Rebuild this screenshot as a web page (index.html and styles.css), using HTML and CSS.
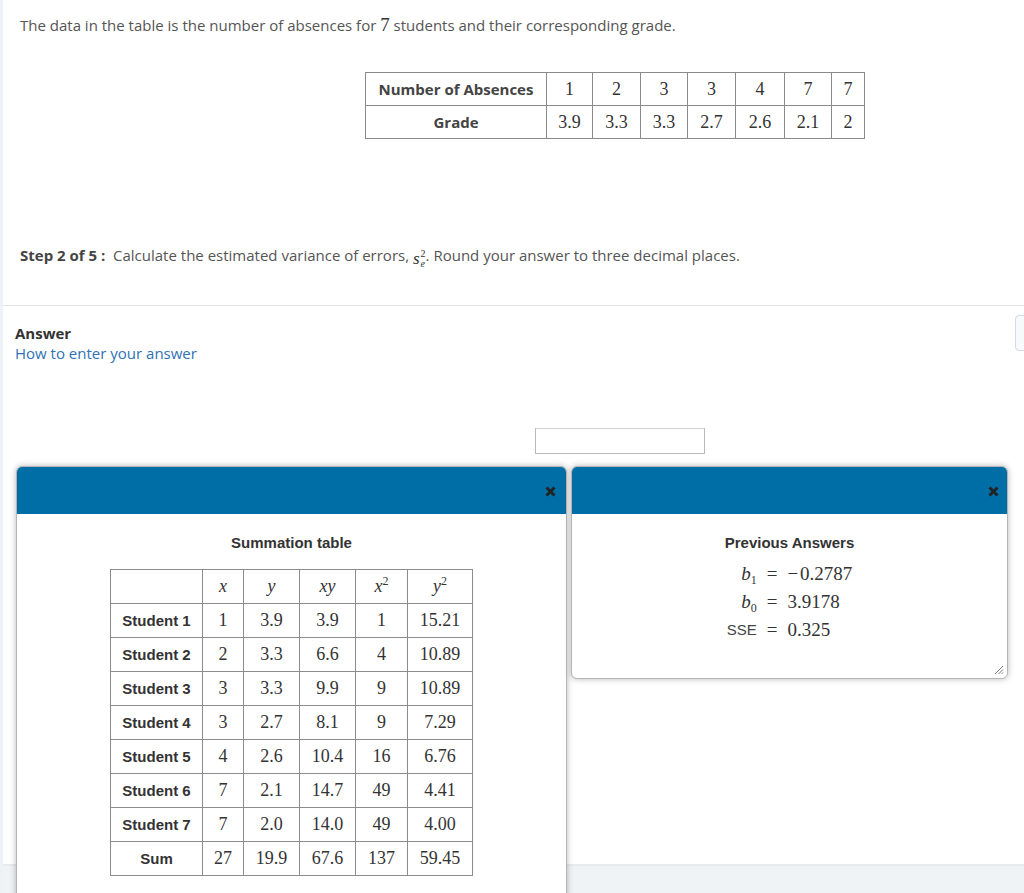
FILE: index.html
```html
<!DOCTYPE html>
<html lang="en">
<head>
<meta charset="utf-8">
<title>Step 2 of 5</title>
<link rel="stylesheet" href="styles.css">
</head>
<body>
<div class="page">
  <section class="question">
    <p class="intro">The data in the table is the number of absences for <span class="num">7</span> students and their corresponding grade.</p>
    <table class="data">
      <tr><th>Number of Absences</th><td>1</td><td>2</td><td>3</td><td>3</td><td>4</td><td>7</td><td>7</td></tr>
      <tr><th>Grade</th><td>3.9</td><td>3.3</td><td>3.3</td><td>2.7</td><td>2.6</td><td>2.1</td><td>2</td></tr>
    </table>
    <p class="step"><b>Step 2 of 5 :</b>&nbsp; Calculate the estimated variance of errors, <span class="se"><i>s</i><span class="ss"><span class="sup">2</span><span class="sub">e</span></span></span>. Round your answer to three decimal places.</p>
  </section>

  <section class="answer">
    <div class="answer-label">Answer</div>
    <a class="howto" href="#">How to enter your answer</a>
    <div class="input-row"><div class="input-box"></div></div>
  </section>

  <footer class="bottom-bar"></footer>

  <div class="side-tab"></div>

  <div class="dialog dialog-sum">
    <div class="dialog-head">
      <svg class="close" width="11" height="11" viewBox="0 0 11 11"><path d="M1.5 1.5 L9.5 9.5 M9.5 1.5 L1.5 9.5" stroke="#222" stroke-width="3" stroke-linecap="butt"/></svg>
    </div>
    <div class="dialog-body">
      <div class="dialog-title">Summation table</div>
      <table class="sum">
        <tr><th></th><td class="m"><i>x</i></td><td class="m"><i>y</i></td><td class="m"><i>xy</i></td><td class="m"><i>x</i><sup>2</sup></td><td class="m"><i>y</i><sup>2</sup></td></tr>
        <tr><th>Student 1</th><td>1</td><td>3.9</td><td>3.9</td><td>1</td><td>15.21</td></tr>
        <tr><th>Student 2</th><td>2</td><td>3.3</td><td>6.6</td><td>4</td><td>10.89</td></tr>
        <tr><th>Student 3</th><td>3</td><td>3.3</td><td>9.9</td><td>9</td><td>10.89</td></tr>
        <tr><th>Student 4</th><td>3</td><td>2.7</td><td>8.1</td><td>9</td><td>7.29</td></tr>
        <tr><th>Student 5</th><td>4</td><td>2.6</td><td>10.4</td><td>16</td><td>6.76</td></tr>
        <tr><th>Student 6</th><td>7</td><td>2.1</td><td>14.7</td><td>49</td><td>4.41</td></tr>
        <tr><th>Student 7</th><td>7</td><td>2.0</td><td>14.0</td><td>49</td><td>4.00</td></tr>
        <tr><th>Sum</th><td>27</td><td>19.9</td><td>67.6</td><td>137</td><td>59.45</td></tr>
      </table>
    </div>
  </div>

  <div class="dialog dialog-prev">
    <div class="dialog-head">
      <svg class="close" width="11" height="11" viewBox="0 0 11 11"><path d="M1.5 1.5 L9.5 9.5 M9.5 1.5 L1.5 9.5" stroke="#222" stroke-width="3" stroke-linecap="butt"/></svg>
    </div>
    <div class="dialog-body">
      <div class="dialog-title">Previous Answers</div>
      <div class="prev-grid">
        <span class="lbl"><i>b</i><sub>1</sub></span><span class="eq">=</span><span class="val">−&#8202;0.2787</span>
        <span class="lbl"><i>b</i><sub>0</sub></span><span class="eq">=</span><span class="val">3.9178</span>
        <span class="lbl sse">SSE</span><span class="eq">=</span><span class="val">0.325</span>
      </div>
      <svg class="resize" width="11" height="11" viewBox="0 0 11 11"><path d="M10 2 L2 10 M10 5.5 L5.5 10 M10 8.5 L8.5 10" stroke="#777" stroke-width="1"/></svg>
    </div>
  </div>
</div>
</body>
</html>
```

FILE: styles.css
```css
* { box-sizing: border-box; }

html, body {
  margin: 0;
  padding: 0;
  background: #ffffff;
}

body {
  font-family: "Open Sans", "Liberation Sans", sans-serif;
  font-size: 15px;
  color: #555555;
}

.page {
  position: relative;
  height: 893px;
  overflow: hidden;
  border-left: 3px solid #eef2f6;
  display: flex;
  flex-direction: column;
}

/* ---------- question ---------- */
.question {
  padding: 15px 0 0 17px;
  border-bottom: 1px solid #e2e4e6;
  height: 306px;
  flex: none;
}

.intro {
  margin: 0;
  line-height: 20px;
}

.intro .num {
  font-family: "Liberation Serif", serif;
  font-size: 19px;
  color: #333;
}

.data {
  margin: 37px 0 0 345px;
  border-collapse: collapse;
  border: 1px solid #555;
}

.data th,
.data td {
  border: 1px solid #8a8a8a;
  height: 33px;
  padding: 0;
  text-align: center;
}

.data th {
  width: 181px;
  font-family: "Open Sans", "Liberation Sans", sans-serif;
  font-size: 15px;
  font-weight: 700;
  color: #444;
}

.data td {
  font-family: "Liberation Serif", serif;
  font-size: 18px;
  color: #333;
}

.data tr td:nth-child(2) { width: 46px; }
.data tr td:nth-child(3) { width: 48px; }
.data tr td:nth-child(4) { width: 47px; }
.data tr td:nth-child(5) { width: 48px; }
.data tr td:nth-child(6) { width: 49px; }
.data tr td:nth-child(7) { width: 47px; }
.data tr td:nth-child(8) { width: 33px; }

.step {
  margin: 106px 0 0;
  line-height: 20px;
}

.step b {
  color: #444;
}

.se {
  font-family: "Liberation Serif", serif;
  font-size: 17px;
  color: #333;
  display: inline-flex;
  align-items: center;
  vertical-align: -3px;
}

.se .ss {
  display: inline-flex;
  flex-direction: column;
  font-size: 10px;
  line-height: 10px;
  margin-left: 1px;
}

.se .sub { font-style: italic; }

/* ---------- answer ---------- */
.answer {
  flex: 1;
  padding: 17px 0 0 12px;
}

.answer-label {
  font-weight: 700;
  color: #333;
  line-height: 20px;
}

.howto {
  display: block;
  color: #2f72b5;
  text-decoration: none;
  line-height: 20px;
}

.input-row {
  margin: 65px 0 0 520px;
}

.input-box {
  width: 170px;
  height: 26px;
  border: 1px solid #b8b8b8;
  border-top-color: #d2d2d2;
  background: #fff;
}

.bottom-bar {
  flex: none;
  height: 29px;
  background: #f0f3f6;
  border-top: 2px solid #e7eaee;
}

.side-tab {
  position: absolute;
  left: 1012px;
  top: 315px;
  width: 24px;
  height: 36px;
  border: 1px solid #cfdbe6;
  border-radius: 4px;
  background: #f7f9fb;
}

/* ---------- dialogs ---------- */
.dialog {
  position: absolute;
  top: 466px;
  background: #fff;
  border: 1px solid #b5b5b5;
  border-radius: 6px;
  box-shadow: 0 0 6px rgba(0, 0, 0, 0.28);
  overflow: hidden;
}

.dialog-sum {
  left: 13px;
  width: 551px;
  height: 460px;
}

.dialog-prev {
  left: 568px;
  width: 437px;
  height: 213px;
}

.dialog-head {
  position: relative;
  height: 47px;
  background: #006ea6;
}

.close {
  position: absolute;
  top: 19px;
}

.dialog-sum .close { right: 10px; }
.dialog-prev .close { right: 8px; }

.dialog-body {
  position: relative;
  padding-top: 19px;
  height: calc(100% - 47px);
}

.dialog-title {
  font-family: "Liberation Sans", Arial, sans-serif;
  font-weight: 700;
  font-size: 15px;
  line-height: 20px;
  color: #333;
  text-align: center;
}

.sum {
  margin: 16px auto 0;
  border-collapse: collapse;
  border: 1px solid #555;
}

.sum th,
.sum td {
  height: 34px;
  padding: 0;
  border: 1px solid #8c8c8c;
  text-align: center;
}

.sum th {
  width: 92px;
  font-family: "Liberation Sans", Arial, sans-serif;
  font-size: 15px;
  font-weight: 700;
  color: #333;
}

.sum td {
  font-family: "Liberation Serif", serif;
  font-size: 18px;
  color: #333;
}

.sum td:nth-child(2) { width: 41px; }
.sum td:nth-child(3) { width: 56px; }
.sum td:nth-child(4) { width: 56px; }
.sum td:nth-child(5) { width: 52px; }
.sum td:nth-child(6) { width: 65px; }

.sum td.m sup {
  font-size: 12px;
  line-height: 0;
  vertical-align: 7px;
  font-style: normal;
}

.prev-grid {
  margin-top: 9px;
  display: grid;
  grid-template-columns: auto auto auto;
  column-gap: 10px;
  row-gap: 5px;
  justify-content: center;
  font-family: "Liberation Serif", serif;
  font-size: 19px;
  color: #333;
  line-height: 23px;
}

.prev-grid .lbl {
  text-align: right;
}

.prev-grid .lbl sub {
  font-size: 12px;
  line-height: 0;
  vertical-align: -4px;
}

.prev-grid .sse {
  font-family: "Liberation Sans", Arial, sans-serif;
  font-size: 15px;
  color: #444;
}

.resize {
  position: absolute;
  right: 3px;
  bottom: 3px;
}
```
